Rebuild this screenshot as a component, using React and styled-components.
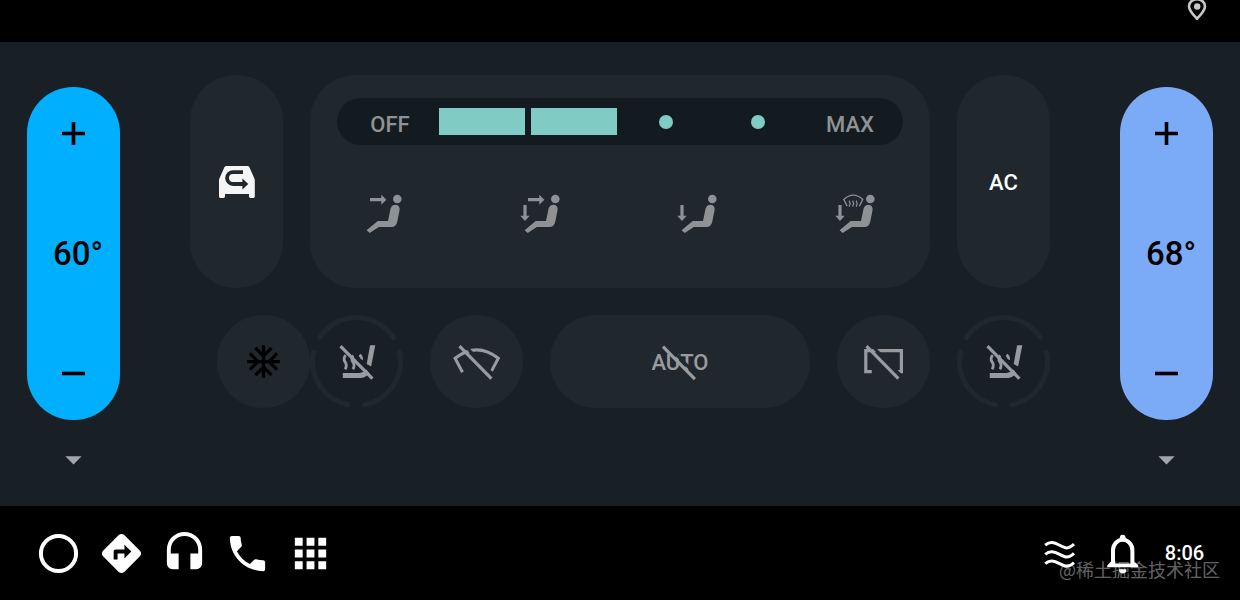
import React, { useState } from 'react'
import styled, { createGlobalStyle, ThemeProvider } from 'styled-components'
import {
  MdAcUnit,
  MdApps,
  MdArrowDropDown,
  MdDirections,
  MdHeadset,
  MdPhone,
} from 'react-icons/md'

const theme = {
  black: '#000000',
  panel: '#182026',
  card: '#20272d',
  track: '#141b20',
  white: '#ffffff',
  icon: '#8e9294',
  off: '#999c9f',
  teal: '#80cbc4',
  cold: '#00b0ff',
  mild: '#7baaf7',
}

const GlobalStyle = createGlobalStyle`
  * { box-sizing: border-box; }

  body {
    margin: 0;
    background: ${theme.black};
    font-family: Roboto, "Noto Sans CJK SC", sans-serif;
  }

  svg { display: block; flex: none; }
`

const Screen = styled.div`
  position: relative;
  display: flex;
  flex-direction: column;
  min-height: 100vh;
`

const StatusBar = styled.header`
  display: flex;
  justify-content: flex-end;
  height: 42px;
  padding: 0 33px;
  color: #c8c8c8;
`

const Panel = styled.main`
  flex: 1;
  display: flex;
  gap: 70px;
  padding: 33px 27px 26px;
  background: ${props => props.theme.panel};
`

const PlainButton = styled.button`
  display: flex;
  align-items: center;
  justify-content: center;
  padding: 0;
  border: 0;
  background: none;
  color: inherit;
  font: inherit;
  cursor: pointer;
`

/* Temperature columns */

const TempColumn = styled.section`
  display: flex;
  flex-direction: column;
  align-items: center;
  gap: 20px;
  width: 93px;
  padding-top: 12px;
  color: #a3a6a8;
`

const TempPill = styled.div`
  display: flex;
  flex-direction: column;
  align-items: center;
  justify-content: space-between;
  width: 100%;
  height: 333px;
  border-radius: 46px;
  background: ${props => props.theme[props.$tone]};
  color: ${props => props.theme.black};

  output {
    padding-left: 9px;
    font-size: 33px;
    font-weight: 500;
    line-height: 40px;
  }
`

const StepButton = styled(PlainButton)`
  width: 93px;
  height: 93px;
`

/* Centre controls */

const Controls = styled.section`
  flex: 1;
  display: flex;
  flex-direction: column;
  gap: 27px;
`

const TopRow = styled.div`
  display: flex;
  gap: 27px;
  height: 213px;
`

const BottomRow = styled.div`
  display: flex;
  gap: 27px;
  height: 93px;
  padding-left: 27px;
`

const Pair = styled.div`
  display: flex;
`

const Tile = styled(PlainButton)`
  position: relative;
  flex: ${props => (props.$wide ? '1' : 'none')};
  width: 93px;
  border-radius: 46px;
  background: ${props => (props.$ring ? 'none' : props.theme.card)};
  color: ${props => props.theme[props.$color || 'off']};
`

const TileText = styled.span`
  padding-top: 2px;
  font-size: 22px;
  font-weight: 500;
`

/* Lies over the tile's own content */
const Overlay = styled.svg`
  position: absolute;
  inset: 0;
  margin: auto;
`

const FanCard = styled.div`
  flex: 1;
  padding: 23px 27px;
  border-radius: 46px;
  background: ${props => props.theme.card};
  color: ${props => props.theme.icon};
`

const FanBar = styled.div`
  display: grid;
  grid-template-columns: 102px 1fr 102px;
  height: 47px;
  border-radius: 24px;
  background: ${props => props.theme.track};
`

const FanEnd = styled(PlainButton)`
  padding-top: 6px;
  font-size: 22px;
  font-weight: 500;

  &:first-child { padding-left: 4px; }
  &:last-child { padding-right: 4px; }
`

const Levels = styled.div`
  display: grid;
  grid-template-columns: repeat(4, 1fr);
  gap: 6px;
  padding: 10px 0;
`

const Level = styled(PlainButton)`
  background: ${props => (props.$on ? props.theme.teal : 'none')};

  &::before {
    content: '';
    width: 14px;
    height: 14px;
    border-radius: 50%;
    background: ${props => props.theme.teal};
  }
`

const Modes = styled.div`
  display: flex;
  justify-content: space-between;
  padding: 45px 22px 0 23px;
`

/* Bottom navigation */

const NavBar = styled.footer`
  display: flex;
  align-items: center;
  justify-content: space-between;
  height: 94px;
  padding: 0 33px 0 35px;
  color: ${props => props.theme.white};
`

const NavGroup = styled.nav`
  display: flex;
  align-items: center;
  gap: 16px;

  time {
    width: 45px;
    font-size: 20px;
    font-weight: 500;
    text-align: center;
  }
`

const Watermark = styled.span`
  position: absolute;
  right: 20px;
  bottom: 18px;
  color: rgba(255, 255, 255, 0.4);
  font-family: "Noto Sans CJK SC", sans-serif;
  font-size: 18px;
  line-height: 26px;
  pointer-events: none;
`

/* Icons */

const PlaceIcon = () => (
  <svg width="20" height="20" viewBox="0 0 20 20">
    <path
      d="M10 18.8C7 15.5 2 10.4 2 6.4A8 7.2 0 0 1 18 6.4C18 10.4 13 15.5 10 18.8Z"
      fill="none"
      stroke="currentColor"
      strokeWidth="2.6"
    />
    <circle cx="10.2" cy="6.5" r="3.2" fill="currentColor" />
  </svg>
)

const StepIcon = ({ plus }) => (
  <svg width="23" height="23" viewBox="0 0 23 23" stroke="currentColor" strokeWidth="3.6">
    <path d={plus ? 'M0 11.5H23M11.5 0V23' : 'M0 11.5H23'} />
  </svg>
)

const RecirculateIcon = () => (
  <svg width="39" height="39" viewBox="0 0 39 39">
    <path
      fill="#f5f5f5"
      d="M9.5 4H30.5Q31.9 4 32.4 5.3L37.4 16.6Q37.8 17.5 37.8 18.5V34.6Q37.8 36 36.4 36H33.4Q32 36 32 34.6V32H8V34.6Q8 36 6.6 36H3.4Q2 36 2 34.6V18.5Q2 17.5 2.4 16.6L7.4 5.3Q8 4 9.5 4Z"
    />
    <path d="M26 10.2H16A5.9 5.9 0 0 0 16 22H26.5" fill="none" stroke={theme.card} strokeWidth="3.8" />
    <path d="M25.4 16.4L31.3 22L25.4 27.6Z" fill={theme.card} />
  </svg>
)

const ModeIcon = ({ face, feet, windshield }) => (
  <svg width="48" height="48" viewBox="0 0 48 48" fill="currentColor">
    <circle cx="37.3" cy="9" r="4.3" />
    <path d="M17.7 31H28L30.6 18.6Q31.6 14.8 35.6 14.8Q40 15.4 39.6 20L37.2 32Q36 37 31.5 37H18.9L9.7 43.1L6.6 40.2Z" />
    {face && <path d="M10 8.1H21.3V4.7L26.4 9.7L21.3 14.7V11.3H10Z" />}
    {feet && <path d="M5.4 15H8.6V25.8H11.7L7 31L2.3 25.8H5.4Z" />}
    {windshield && (
      <g fill="none" stroke="currentColor" strokeWidth="1.3">
        <path d="M14.2 16.2L10.8 9.4Q20.3 .8 29.8 9.4L26.4 16.2" />
        <path d="M16.8 10.6q-1 1 0 2t0 2t0 2M20.3 10.6q-1 1 0 2t0 2t0 2M23.8 10.6q-1 1 0 2t0 2t0 2" />
      </g>
    )}
  </svg>
)

// Diagonal strike with a thin gap cut along its upper side
const Strike = ({ gap }) => (
  <>
    <path d="M11 6.7L42.7 39.4" stroke={gap} strokeWidth="3" />
    <path d="M7 8.6L38.9 41.2" stroke="currentColor" strokeWidth="3.2" />
  </>
)

const SeatOffIcon = () => (
  <svg width="47" height="47" viewBox="-0.5 0.5 47 47" fill="none">
    <path d="M36.6 7.8H41.8L37.6 29L33.2 26.5Z" fill="currentColor" />
    <path d="M9.3 35.5H26Q30 35 33 32L36 36Q31 40.5 27 40.5H9.3Z" fill="currentColor" />
    <path
      d="M12.2 17.6q-3 3.4-.6 6.8t0 7.4M20 17.6q-3 3.4-.6 6.8t0 7.4M26 17.3q2.5 2 2 5"
      stroke="currentColor"
      strokeWidth="2.8"
    />
    <Strike gap={theme.panel} />
  </svg>
)

const FrontDefrostOffIcon = () => (
  <svg width="47" height="47" viewBox="0.5 0.5 47 47" fill="none">
    <path
      d="M10 34.8L2.6 20.8Q24.2 4 45.8 20.8L39 33.6"
      stroke="currentColor"
      strokeWidth="3"
    />
    <Strike gap={theme.card} />
  </svg>
)

const RearDefrostOffIcon = () => (
  <svg width="47" height="47" viewBox="0.5 0.5 47 47" fill="none">
    <path d="M12.3 34.2H6.3V13.2H41.9V34.2H37" stroke="currentColor" strokeWidth="3.2" />
    <Strike gap={theme.card} />
  </svg>
)

const Ring = () => (
  <Overlay
    width="93"
    height="93"
    viewBox="-46.5 -46.5 93 93"
    fill="none"
    stroke={theme.card}
    strokeWidth="5"
    strokeLinecap="round"
  >
    <path d="M-36.8 -24.1A44 44 0 0 1 36.8 -24.1" />
    <path d="M43 -9.3A44 44 0 0 1 8.4 43.2" />
    <path d="M-43 -9.3A44 44 0 0 0 -8.4 43.2" />
  </Overlay>
)

const HomeIcon = () => (
  <svg width="47" height="47" viewBox="0 0 47 47">
    <circle cx="23.5" cy="23.5" r="17.6" fill="none" stroke="currentColor" strokeWidth="4" />
  </svg>
)

const AirIcon = () => (
  <svg width="47" height="47" viewBox="0 0 47 47" fill="none" stroke="currentColor" strokeWidth="3">
    {[15.2, 24.4, 33.6].map(y => (
      <path key={y} d={`M9.2 ${y}C14 ${y - 4} 18 ${y - 3} 23.6 ${y}S32 ${y + 4.5} 38 ${y - 1}`} />
    ))}
  </svg>
)

const BellIcon = () => (
  <svg width="47" height="47" viewBox="0 0 47 47">
    <circle cx="23.7" cy="7.6" r="2.9" fill="currentColor" />
    <path d="M14 35V20.5A9.7 10.7 0 0 1 33.4 20.5V35" fill="none" stroke="currentColor" strokeWidth="4" />
    <path d="M12 31.5L8.2 35.5V37.2H39.3V35.5L35.4 31.5V33.4H12Z" fill="currentColor" />
    <path d="M20 39.2H27.4A3.7 4.2 0 0 1 20 39.2Z" fill="currentColor" />
  </svg>
)

const Temperature = ({ label, tone, initial }) => {
  const [value, setValue] = useState(initial)

  return (
    <TempColumn aria-label={label}>
      <TempPill $tone={tone}>
        <StepButton aria-label="Warmer" onClick={() => setValue(value + 1)}>
          <StepIcon plus />
        </StepButton>
        <output>{value}°</output>
        <StepButton aria-label="Cooler" onClick={() => setValue(value - 1)}>
          <StepIcon />
        </StepButton>
      </TempPill>
      <PlainButton aria-label="Close panel">
        <MdArrowDropDown size={39} />
      </PlainButton>
    </TempColumn>
  )
}

const modes = [
  { label: 'Face', face: true },
  { label: 'Face and feet', face: true, feet: true },
  { label: 'Feet', feet: true },
  { label: 'Feet and windshield', feet: true, windshield: true },
]

const FanPanel = () => {
  const [speed, setSpeed] = useState(2)

  return (
    <FanCard>
      <FanBar>
        <FanEnd onClick={() => setSpeed(0)}>OFF</FanEnd>
        <Levels>
          {[1, 2, 3, 4].map(level => (
            <Level
              key={level}
              $on={level <= speed}
              aria-label={`Fan speed ${level}`}
              onClick={() => setSpeed(level)}
            />
          ))}
        </Levels>
        <FanEnd onClick={() => setSpeed(4)}>MAX</FanEnd>
      </FanBar>
      <Modes>
        {modes.map(({ label, ...parts }) => (
          <PlainButton key={label} aria-label={label}>
            <ModeIcon {...parts} />
          </PlainButton>
        ))}
      </Modes>
    </FanCard>
  )
}

const SeatHeater = ({ label }) => (
  <Tile $ring aria-label={label}>
    <Ring />
    <SeatOffIcon />
  </Tile>
)

const apps = [
  { label: 'Home', icon: <HomeIcon /> },
  { label: 'Navigation', icon: <MdDirections size={47} /> },
  { label: 'Media', icon: <MdHeadset size={47} /> },
  { label: 'Phone', icon: <MdPhone size={47} /> },
  { label: 'Apps', icon: <MdApps size={47} /> },
]

const App = () => (
  <ThemeProvider theme={theme}>
    <GlobalStyle />
    <Screen>
      <StatusBar>
        <PlaceIcon />
      </StatusBar>

      <Panel>
        <Temperature label="Driver temperature" tone="cold" initial={60} />
        <Controls>
          <TopRow>
            <Tile aria-label="Recirculate air">
              <RecirculateIcon />
            </Tile>
            <FanPanel />
            <Tile $color="white">
              <TileText>AC</TileText>
            </Tile>
          </TopRow>
          <BottomRow>
            <Pair>
              <Tile $color="black" aria-label="Max AC">
                <MdAcUnit size={39} />
              </Tile>
              <SeatHeater label="Driver seat heater" />
            </Pair>
            <Tile aria-label="Front defrost">
              <FrontDefrostOffIcon />
            </Tile>
            <Tile $wide>
              <TileText>AUTO</TileText>
              <Overlay width="48" height="48" viewBox="0 0 48 48">
                <Strike gap={theme.card} />
              </Overlay>
            </Tile>
            <Tile aria-label="Rear defrost">
              <RearDefrostOffIcon />
            </Tile>
            <SeatHeater label="Passenger seat heater" />
          </BottomRow>
        </Controls>
        <Temperature label="Passenger temperature" tone="mild" initial={68} />
      </Panel>

      <NavBar>
        <NavGroup aria-label="Apps">
          {apps.map(({ label, icon }) => (
            <PlainButton key={label} aria-label={label}>{icon}</PlainButton>
          ))}
        </NavGroup>
        <NavGroup aria-label="System">
          <PlainButton aria-label="Climate"><AirIcon /></PlainButton>
          <PlainButton aria-label="Notifications"><BellIcon /></PlainButton>
          <time>8:06</time>
        </NavGroup>
      </NavBar>

      <Watermark>@稀土掘金技术社区</Watermark>
    </Screen>
  </ThemeProvider>
)

export default App
